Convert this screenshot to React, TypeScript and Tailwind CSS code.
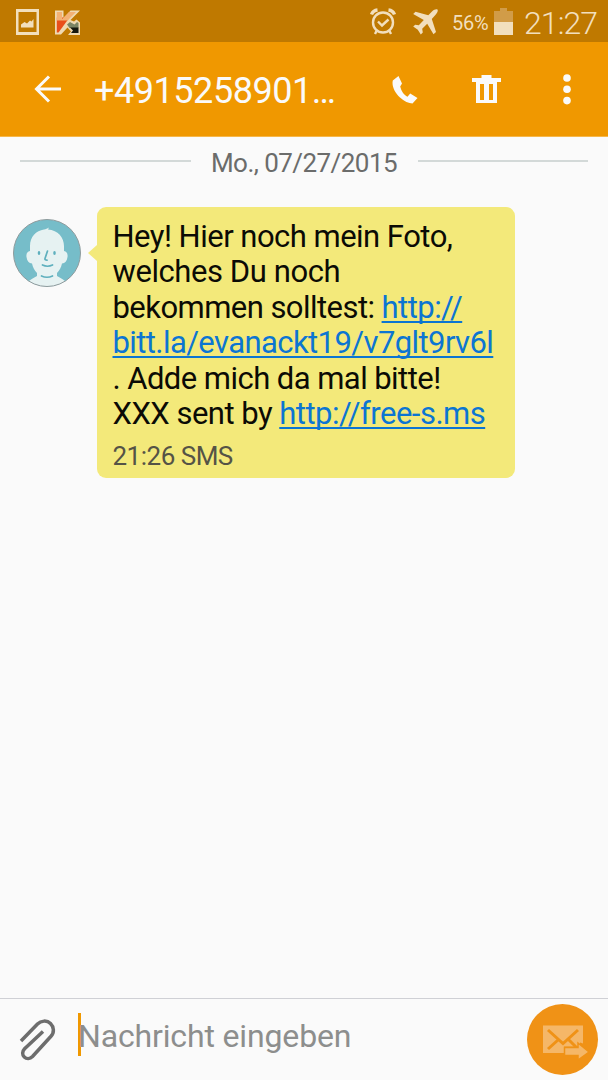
import type { ReactNode } from 'react';

type IconProps = {
  box: string;
  className: string;
  children: ReactNode;
};

function Icon({ box, className, children }: IconProps) {
  return (
    <svg viewBox={box} className={`block shrink-0 ${className}`} aria-hidden="true">
      {children}
    </svg>
  );
}

function StatusBar() {
  return (
    <div className="flex h-[42px] items-center bg-[#bf7900] text-[#f2dfbd]">
      <Icon box="0 0 23 26" className="mt-[2px] ml-4 h-[26px] w-[23px]">
        <path fill="currentColor" fillRule="evenodd" d="M0 0h23v26H0zM2.500 3v20h18V3z" />
        <path fill="currentColor" d="M5 18.500v-3L8.500 13l2.500 1.500 3-3 1.500 1L17.500 10v8.500z" />
      </Icon>
      <Icon box="0 0 25 25" className="mt-[2px] ml-4 h-[25px] w-[25px]">
        <path fill="#efd9b1" d="M0 .5h8.500v8l7-8H25L15.500 10l3.500 1.500 2.500-2L25 12.500V25H13l3-3.500-3.500-4L6 24.500H0z" />
        <path fill="#e94e1b" d="M1.800 7.500h12.700L3.500 22.500H1.800z" />
        <path fill="#f3b174" d="M1.800 2H7v7L14 2h7l-8.500 8.500H1.800z" />
        <path fill="#7b8464" d="m12 14.500 3-2.500 4.500 2.500 2.500-2.500 1.500 1V18h-9z" />
        <path fill="#15170e" d="M15 17.500h8.500V23h-7.500l2-2.500z" />
      </Icon>

      <Icon box="0 0 26 27" className="ml-[290px] h-[27px] w-[26px]">
        <g fill="none" stroke="currentColor">
          <circle cx="13" cy="14.500" r="10" strokeWidth="2.400" />
          <path strokeWidth="3.400" d="M1.500 6.500Q3 2.500 7.500 2M24.500 6.500Q23 2.500 18.500 2" />
          <path strokeWidth="2.400" d="m8 13.500 4 4 6.500-6M6.500 23 5 26M19.500 23l1.500 3" />
        </g>
      </Icon>
      <Icon box="0 0 25 26" className="mt-[1px] ml-[17px] h-[26px] w-[25px]">
        <path
          fill="currentColor"
          d="M24.500.5c.8 1.500-.4 3.500-1.700 5l-4 4.500L23 23l-2.500 2.200-6.300-10.500-5 5 .6 3.800-2 2-3-4.800L.2 17.500l2-1.800 3.600.6 5-5.300L.2 5l2.300-2.300 12.800 3.500 4.200-4.200c1.500-1.300 3.500-2.200 5-1.500z"
        />
      </Icon>
      <span className="ml-[14px] w-[38px] pt-1 text-[20px] leading-none tracking-[-0.3px] whitespace-nowrap">
        56%
      </span>
      <Icon box="0 0 19 27" className="ml-[4px] h-[27px] w-[19px]">
        <path fill="#d19c48" d="M6 0h7v3h6v11H0V3h6z" />
        <path fill="currentColor" d="M0 14h19v13H0z" />
      </Icon>
      <span className="ml-[11px] pt-[3px] text-[32px] leading-none font-light tracking-[-0.9px] whitespace-nowrap">
        21:27
      </span>
    </div>
  );
}

function Header() {
  return (
    <header className="flex h-[95px] items-center border-b border-[#f6b74a] bg-[#f09800] text-[#fafafa]">
      <Icon box="0 0 28 28" className="ml-[34px] h-[28px] w-[28px]">
        <path fill="none" stroke="currentColor" strokeWidth="3" d="M15 1.500 2.500 14 15 26.500M2 14h25" />
      </Icon>
      <h1 className="ml-[32px] w-[250px] pt-[4px] text-[36px] leading-none tracking-[-0.45px] whitespace-nowrap">
        +4915258901…
      </h1>
      <Icon box="0 0 26 28" className="mt-[1px] ml-[48px] h-[28px] w-[26px]">
        <path
          fill="currentColor"
          d="M6.500 0 .8 4.500C-.5 10 3 17 8 21.500c4 3.800 9 6 12.500 6l5-5.500-7.300-4.500-2.700 3.300c-3.500-1.600-6.300-6-7.300-10.300L10 7.500z"
        />
      </Icon>
      <Icon box="0 0 29 28" className="ml-[54px] h-[28px] w-[29px]">
        <path
          fill="currentColor"
          fillRule="evenodd"
          d="M9.500 0h10v3H29v4h-4v21H4V7H0V3h9.500zM8 9v16h4V9zM17 9v16h4V9z"
        />
      </Icon>
      <Icon box="0 0 8 31" className="ml-[62px] h-[31px] w-[8px]">
        <circle cx="4" cy="4" r="3.800" fill="currentColor" />
        <circle cx="4" cy="15.300" r="3.800" fill="currentColor" />
        <circle cx="4" cy="26.600" r="3.800" fill="currentColor" />
      </Icon>
    </header>
  );
}

function Avatar() {
  return (
    <Icon box="0 0 68 68" className="mt-[12px] h-[68px] w-[68px]">
      <clipPath id="avatar">
        <circle cx="34" cy="34" r="33.500" />
      </clipPath>
      <circle cx="34" cy="34" r="33.500" fill="#76bdc9" />
      <g clipPath="url(#avatar)">
        <path
          fill="#e6f2f2"
          d="M17 32V27c0-9 6-15.500 14-16.500 2-.3 3-.8 5-2l-1 2c10 .7 16 8 16 16.500v5c2.500.3 4 2.500 3.500 6-.5 4-2.500 6.300-5.500 6.500-.8 4-2.500 7-5 9.500V57c3 2 6 3 8 5l3 6H13l3-6c2-2 5-3 8-5v-3c-2.500-2.500-4.200-5.500-5-9.500-3-.2-5-2.500-5.500-6.500-.5-3.500 1-5.700 3.500-6z"
        />
        <g fill="none" stroke="#5fb0be" strokeWidth="1.700" strokeLinecap="round">
          <path d="M34.500 32 32 39.500c-.3 1 .3 1.700 2 1.700M29.500 46q5 2.500 10 0M28.500 57q5.500 2.500 11 0" />
        </g>
        <ellipse cx="26" cy="34" rx="1.300" ry="2" fill="#5fb0be" />
        <ellipse cx="41.500" cy="34" rx="1.300" ry="2" fill="#5fb0be" />
      </g>
      <circle cx="34" cy="34" r="33.500" fill="none" stroke="#8f9b9d" strokeWidth="1" />
    </Icon>
  );
}

const linkClass = 'text-[#0c75d2] underline decoration-2 underline-offset-[3px] [text-decoration-skip-ink:none]';

function Message() {
  return (
    <div className="flex pt-[18px] pl-[13px]">
      <Avatar />
      <Icon box="0 0 9 16" className="mt-[38px] ml-[7px] h-[16px] w-[9px]">
        <path fill="#f3e97a" d="M9 0v16L0 8z" />
      </Icon>
      <div className="h-[271px] w-[418px] rounded-[9px] bg-[#f3e97a] pt-[11.500px] pl-[15.500px] whitespace-nowrap">
        <div className="text-[31px] leading-[35.5px] text-[#0b0b05]">
          <p className="tracking-[-0.52px]">Hey! Hier noch mein Foto,</p>
          <p className="tracking-[-0.42px]">welches Du noch</p>
          <p className="tracking-[-0.55px]">
            bekommen solltest: <a className={linkClass}>http://</a>
          </p>
          <p className="tracking-[-0.59px]">
            <a className={linkClass}>bitt.la/evanackt19/v7glt9rv6l</a>
          </p>
          <p className="tracking-[-0.55px]">. Adde mich da mal bitte!</p>
          <p className="tracking-[-0.52px]">
            XXX sent by <a className={linkClass}>http://free-s.ms</a>
          </p>
        </div>
        <p className="mt-[8px] text-[26px] leading-[32px] tracking-[-0.5px] text-[#555346]">21:26 SMS</p>
      </div>
    </div>
  );
}

function Composer() {
  return (
    <footer className="flex h-[82px] border-t border-[#cfd0d5] bg-[#fafafa]">
      <Icon box="0 0 38 42" className="mt-[20px] ml-[19px] h-[42px] w-[38px]">
        <path
          fill="none"
          stroke="#6d6d6d"
          strokeWidth="3.500"
          d="M2 22 18.500 5C22 1.500 28 1 31.500 4.500s4 9 .5 12.700L13.500 37.500c-2.500 2.600-6 2.600-8.200.5s-2.300-5.500.3-8.200L24 12.500"
        />
      </Icon>
      <div className="mt-[14px] ml-[21px] h-[43px] w-[3px] bg-[#f09800]" />
      <span className="-ml-[3px] w-[449px] pt-[19px] text-[32px] leading-[36px] tracking-[-0.15px] whitespace-nowrap text-[#8d8e8d]">
        Nachricht eingeben
      </span>
      <Icon box="0 0 72 72" className="mt-[5px] h-[72px] w-[72px]">
        <circle cx="35.500" cy="35.500" r="35.500" fill="#f09216" />
        <path fill="#f5b768" d="M16 21.500H56v18l-3-1v4H37v6.500H16z" />
        <path fill="none" stroke="#f09216" strokeWidth="3" d="m21 26 15 13.500L51 26M21 45l10-9M51 45l-9-9" />
        <path fill="#f5b768" stroke="#f09216" strokeWidth="1.500" d="M37.500 43.500H51V39l11 9-11 8v-4.500H37.500z" />
      </Icon>
    </footer>
  );
}

export default function App() {
  return (
    <div className="flex h-[1080px] w-[608px] flex-col overflow-hidden bg-[#fafafa] font-['Roboto',sans-serif]">
      <StatusBar />
      <Header />
      <main className="flex-1">
        <div className="flex h-[52px] items-center px-5">
          <div className="mb-1 h-[2px] flex-1 bg-[#d3d9d8]" />
          <span className="w-[227px] pt-[1px] text-center text-[26px] tracking-[-0.55px] text-[#6b6c6b]">
            Mo., 07/27/2015
          </span>
          <div className="mb-1 h-[2px] flex-1 bg-[#d3d9d8]" />
        </div>
        <Message />
      </main>
      <Composer />
    </div>
  );
}
